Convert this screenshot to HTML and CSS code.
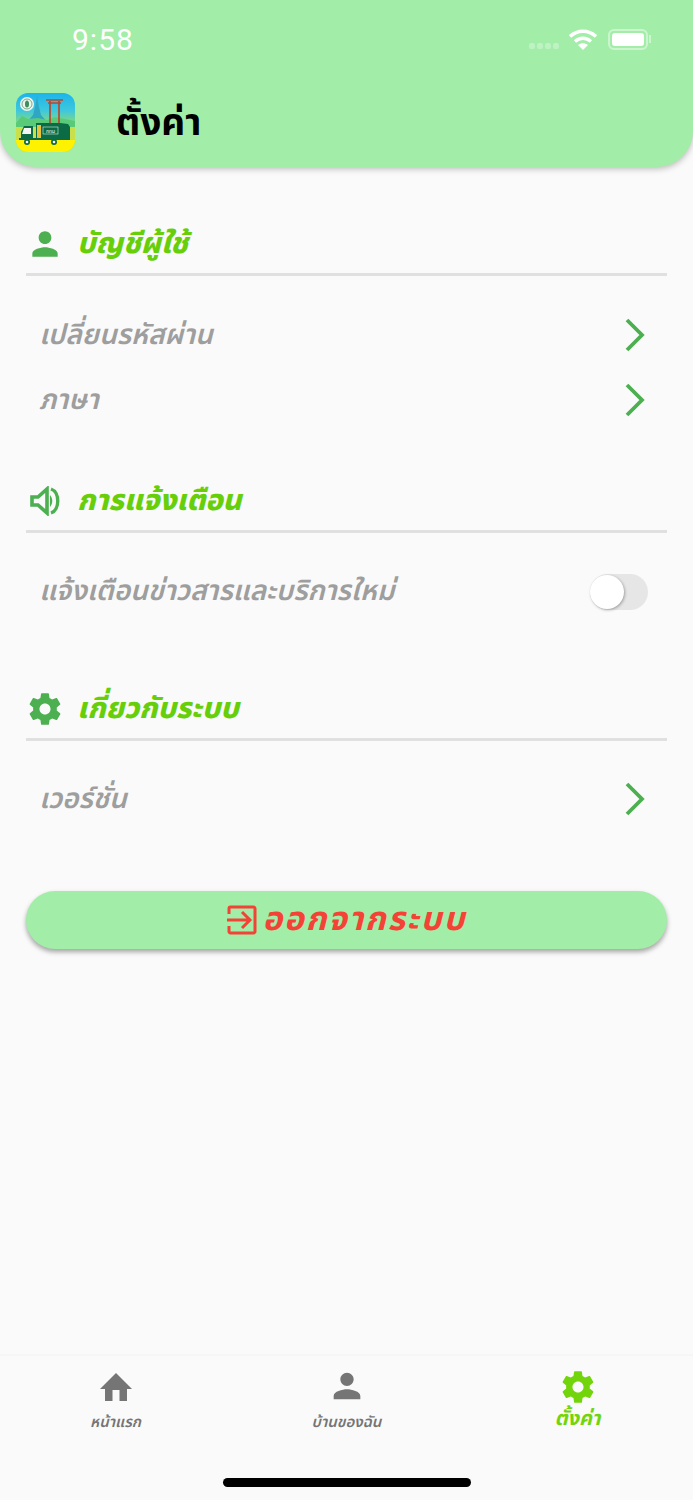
FILE: index.html
```html
<!DOCTYPE html>
<html lang="th">
  <head>
    <meta charset="UTF-8" />
    <title>ตั้งค่า</title>
    <link rel="stylesheet" href="styles.css">
  </head>
  <body>
    <svg class="icon-defs" width="0" height="0">
      <defs>
        <symbol id="i-person" viewBox="0 0 24 24"><path d="M12 12c2.2 0 4-1.8 4-4s-1.800-4-4-4-4 1.800-4 4 1.800 4 4 4zm0 2c-2.700 0-8 1.300-8 4v2h16v-2c0-2.700-5.300-4-8-4z"/></symbol>
        <symbol id="i-gear" viewBox="0 0 24 24"><path d="M19.400 13c.04-.33.06-.66.06-1s-.02-.67-.06-1l2.100-1.650c.19-.15.24-.42.12-.64l-2-3.460c-.12-.22-.39-.3-.61-.22l-2.490 1c-.52-.4-1.080-.73-1.690-.98l-.38-2.650A.49.49 0 0 0 14 2h-4c-.25 0-.46.18-.49.42l-.38 2.650c-.61.25-1.170.59-1.690.98l-2.490-1c-.23-.09-.49 0-.61.22l-2 3.460c-.13.22-.07.49.12.64L4.560 11c-.04.33-.07.67-.07 1s.03.67.07 1l-2.100 1.650c-.19.15-.24.42-.12.64l2 3.460c.12.22.39.3.61.22l2.490-1c.52.4 1.080.73 1.690.98l.38 2.650c.03.24.24.42.49.42h4c.25 0 .46-.18.49-.42l.38-2.650c.61-.25 1.170-.59 1.690-.98l2.490 1c.23.09.49 0 .61-.22l2-3.460c.12-.22.07-.49-.12-.64L19.400 13zM12 15.500c-1.930 0-3.500-1.570-3.500-3.500s1.570-3.500 3.500-3.500 3.500 1.570 3.500 3.500-1.570 3.500-3.500 3.500z"/></symbol>
        <symbol id="i-chevron" viewBox="0 0 20 34"><path d="M2 2l15 15L2 32" fill="none" stroke="currentColor" stroke-width="3.800"/></symbol>
      </defs>
    </svg>

    <!-- ヘッダー -->
    <header class="app-header">
      <div class="status-bar">
        <span class="status-time">9:58</span>
        <div class="status-icons">
          <span class="signal-dots"><i></i><i></i><i></i><i></i></span>
          <svg class="wifi" viewBox="0 0 28 21" width="28" height="21">
            <path d="M1 7.500C8.500 .5 19.500 .5 27 7.500" fill="none" stroke="#fff" stroke-width="3.600"/>
            <path d="M6 12.500c4.800-4.300 11.200-4.300 16 0" fill="none" stroke="#fff" stroke-width="3.400"/>
            <path d="M14 21l-5-5c3-2.400 7-2.400 10 0z" fill="#fff"/>
          </svg>
          <span class="battery"><span class="battery-fill"></span></span>
        </div>
      </div>
      <div class="title-bar">
        <svg class="app-logo" viewBox="0 0 59 59" width="59" height="59">
          <defs>
            <linearGradient id="logo-sky" x1="0" y1="0" x2="0" y2="1">
              <stop offset="0" stop-color="#1cb4ec"/>
              <stop offset="0.3" stop-color="#3fc8dc"/>
              <stop offset="0.55" stop-color="#8fdc6a"/>
            </linearGradient>
            <clipPath id="logo-clip"><rect width="59" height="59" rx="12"/></clipPath>
          </defs>
          <g clip-path="url(#logo-clip)">
            <rect width="59" height="59" fill="url(#logo-sky)"/>
            <path d="M10 30l7-8 2-8 2-11 2 11 2 8 7 8z" fill="#2fa6c4"/>
            <path d="M0 30l6-7 6 3 10-1 9 2 8-3 20 4v8H0z" fill="#59cb78"/>
            <rect y="34" width="59" height="25" fill="#c9e04a"/>
            <rect y="47" width="59" height="12" fill="#fff200"/>
            <circle cx="11" cy="11" r="7" fill="#eef5ee"/>
            <circle cx="11" cy="11" r="5" fill="none" stroke="#7fa88a" stroke-width="1"/>
            <ellipse cx="11" cy="11" rx="2" ry="3.500" fill="#3b8f5a"/>
            <path d="M30 7h17M32 10h13" stroke="#b5482f" stroke-width="1.700"/>
            <path d="M34 8v24M43 8v24" stroke="#b5482f" stroke-width="1.700"/>
            <path d="M20 30h24l8 1 2 3v13H20z" fill="#0a6b45"/>
            <rect x="21" y="32" width="4" height="13" fill="#e9c23a"/>
            <rect x="27" y="34" width="15" height="7" fill="#0a6b45" stroke="#d8efe0" stroke-width=".6"/>
            <text class="logo-text" x="34.500" y="40">กทม</text>
            <path d="M5 46v-7l3-6h9v13z" fill="#0a6b45"/>
            <path d="M8 35h7v6H6z" fill="#f4f8f4"/>
            <rect x="3" y="45" width="50" height="2" fill="#0a6b45"/>
            <circle cx="11" cy="49" r="3" fill="#0a6b45"/><circle cx="11" cy="49" r="1.300" fill="#fff"/>
            <circle cx="38" cy="49" r="3" fill="#0a6b45"/><circle cx="38" cy="49" r="1.300" fill="#fff"/>
          </g>
        </svg>
        <h1 class="page-title">ตั้งค่า</h1>
      </div>
    </header>

    <main class="settings">
      <!-- บัญชีผู้ใช้ -->
      <section class="group group-account">
        <div class="group-head">
          <svg class="group-icon"><use href="#i-person"/></svg>
          <h2>บัญชีผู้ใช้</h2>
        </div>
        <div class="row"><span>เปลี่ยนรหัสผ่าน</span><svg class="chevron"><use href="#i-chevron"/></svg></div>
        <div class="row"><span>ภาษา</span><svg class="chevron"><use href="#i-chevron"/></svg></div>
      </section>

      <!-- การแจ้งเตือน -->
      <section class="group group-notify">
        <div class="group-head">
          <svg class="group-icon group-icon-plain" viewBox="0 0 30 28">
            <path d="M2 10h6l9-8v24l-9-8H2z" fill="none" stroke="currentColor" stroke-width="3.600"/>
            <path d="M20 8c3 3.500 3 8.500 0 12z" fill="currentColor"/>
            <path d="M21 2c9 3 9 21 0 24" fill="none" stroke="currentColor" stroke-width="3.400"/>
          </svg>
          <h2>การแจ้งเตือน</h2>
        </div>
        <div class="row row-switch"><span>แจ้งเตือนข่าวสารและบริการใหม่</span><div class="switch"><div class="switch-knob"></div></div></div>
      </section>

      <!-- เกี่ยวกับระบบ -->
      <section class="group group-about">
        <div class="group-head">
          <svg class="group-icon"><use href="#i-gear"/></svg>
          <h2>เกี่ยวกับระบบ</h2>
        </div>
        <div class="row"><span>เวอร์ชั่น</span><svg class="chevron"><use href="#i-chevron"/></svg></div>
      </section>

      <button class="logout-btn">
        <svg class="logout-icon" viewBox="0 0 30 30" width="30" height="30">
          <path d="M2 9V3.500A1.500 1.500 0 0 1 3.500 2h23A1.500 1.500 0 0 1 28 3.500v23a1.500 1.500 0 0 1-1.500 1.500h-23A1.500 1.500 0 0 1 2 26.500V21" fill="none" stroke="currentColor" stroke-width="3"/>
          <path d="M0 15h22M15 7l8 8-8 8" fill="none" stroke="currentColor" stroke-width="3"/>
        </svg>
        <span>ออกจากระบบ</span>
      </button>
    </main>

    <!-- タブバー -->
    <nav class="tabbar">
      <div class="tab">
        <svg class="tab-icon" viewBox="0 0 32 30"><path d="M16 1L0 17h5v12h7.500V18h7v11H27V17h5z"/></svg>
        <span>หน้าแรก</span>
      </div>
      <div class="tab">
        <svg class="tab-icon tab-icon-person"><use href="#i-person"/></svg>
        <span>บ้านของฉัน</span>
      </div>
      <div class="tab tab-active">
        <svg class="tab-icon"><use href="#i-gear"/></svg>
        <span>ตั้งค่า</span>
      </div>
      <div class="home-indicator"></div>
    </nav>
  </body>
</html>
```

FILE: styles.css
```css
/* ページ全体 */
* {
  box-sizing: border-box;
}
html,
body {
  margin: 0;
  height: 1500px;
}
body {
  width: 693px;
  display: flex;
  flex-direction: column;
  background-color: #fafafa;
  font-family: "Noto Sans", "Noto Sans Thai", "DejaVu Sans", sans-serif;
  overflow: hidden;
}
.icon-defs {
  position: absolute;
}

/* ヘッダー */
.app-header {
  height: 167px;
  background-color: #a2eda8;
  border-radius: 0 0 36px 36px;
  box-shadow: 0 2px 6px rgba(0, 0, 0, 0.25);
  padding: 21px 16px 0;
}
.status-bar {
  display: flex;
  justify-content: space-between;
  align-items: center;
  height: 36px;
  padding: 0 29px 0 56px;
}
.status-time {
  color: #fff;
  font-family: Roboto, sans-serif;
  font-size: 30px;
  font-weight: 400;
  letter-spacing: 1px;
}
.status-icons {
  display: flex;
  align-items: center;
  gap: 10px;
}
.signal-dots {
  display: flex;
  gap: 2px;
  margin-top: 13px;
}
.signal-dots i {
  width: 6px;
  height: 6px;
  border-radius: 2px;
  background-color: rgba(255, 255, 255, 0.3);
}
.wifi {
  margin-right: 1px;
}
.battery {
  position: relative;
  width: 40px;
  height: 21px;
  padding: 2px;
  border: 2px solid rgba(255, 255, 255, 0.45);
  border-radius: 6px;
}
.battery::after {
  content: "";
  position: absolute;
  right: -5px;
  top: 4px;
  width: 2px;
  height: 8px;
  background-color: rgba(255, 255, 255, 0.45);
}
.battery-fill {
  display: block;
  height: 100%;
  background-color: #fff;
  border-radius: 3px;
}
.title-bar {
  display: flex;
  align-items: center;
  gap: 41px;
  margin-top: 36px;
}
.logo-text {
  fill: #fff;
  font-size: 5px;
  text-anchor: middle;
}
.page-title {
  margin: 0 0 4px;
  font-size: 37px;
  line-height: 55px;
  font-weight: 700;
  color: #000;
}

/* 設定リスト */
.settings {
  padding: 0 26px;
}
.group-head {
  display: flex;
  align-items: center;
  gap: 17px;
  height: 52px;
  border-bottom: 3px solid #e0e0e0;
  padding: 0 0 10px 4px;
}
.group-head h2 {
  margin: 0;
  font-size: 29px;
  font-style: italic;
  font-weight: 800;
  color: #66cf0a;
}
.group-icon {
  width: 38px;
  height: 38px;
  margin: 0 -4px;
  color: #4caf50;
  fill: currentColor;
}
.group-icon-plain {
  width: 30px;
  height: 30px;
  margin: 0;
}
.group-account {
  margin-top: 57px;
}
.group-notify {
  margin-top: 48px;
}
.group-about {
  margin-top: 65px;
}
.row {
  display: flex;
  align-items: center;
  justify-content: space-between;
  height: 65px;
  padding: 0 22px 0 13px;
  color: #9e9e9e;
  font-size: 28px;
  font-style: italic;
  font-weight: 600;
}
.group-head + .row {
  margin-top: 27px;
}
.group-notify .group-head + .row,
.group-about .group-head + .row {
  margin-top: 26px;
}
.chevron {
  width: 20px;
  height: 34px;
  margin-top: -2px;
  color: #4caf50;
}

/* スイッチ */
.row-switch {
  padding-right: 19px;
}
.switch {
  width: 58px;
  height: 36px;
  border-radius: 18px;
  background-color: #e6e6e6;
  display: flex;
  align-items: center;
}
.switch-knob {
  width: 34px;
  height: 34px;
  border-radius: 50%;
  background-color: #fff;
  box-shadow: 1px 1px 3px rgba(0, 0, 0, 0.3);
}

/* ログアウト */
.logout-btn {
  display: flex;
  align-items: center;
  justify-content: center;
  gap: 6px;
  width: 100%;
  height: 58px;
  margin-top: 59px;
  border: 0;
  border-radius: 29px;
  background-color: #a2eda8;
  box-shadow: 0 3px 5px rgba(0, 0, 0, 0.35);
  color: #f44336;
  font-family: inherit;
  font-size: 33px;
  font-style: italic;
  font-weight: 700;
  letter-spacing: 2px;
}

/* タブバー */
.tabbar {
  position: relative;
  display: flex;
  margin-top: auto;
  height: 146px;
  border-top: 2px solid #f6f6f6;
  padding-top: 15px;
}
.tab {
  flex: 1;
  display: flex;
  flex-direction: column;
  align-items: center;
  color: #757575;
  font-size: 15px;
  font-style: italic;
  font-weight: 600;
}
.tab-icon {
  width: 32px;
  height: 32px;
  fill: currentColor;
}
.tab-icon-person {
  width: 40px;
  height: 40px;
  margin: -5px 0 -3px;
}
.tab span {
  margin-top: 8px;
}
.tab-active {
  color: #72d50c;
  font-size: 20px;
  font-weight: 700;
}
.tab-active .tab-icon {
  width: 38px;
  height: 38px;
  margin-top: -3px;
}
.tab-active span {
  margin-top: -2px;
}
.home-indicator {
  position: absolute;
  left: 223px;
  bottom: 13px;
  width: 248px;
  height: 9px;
  border-radius: 5px;
  background-color: #000;
}
```
